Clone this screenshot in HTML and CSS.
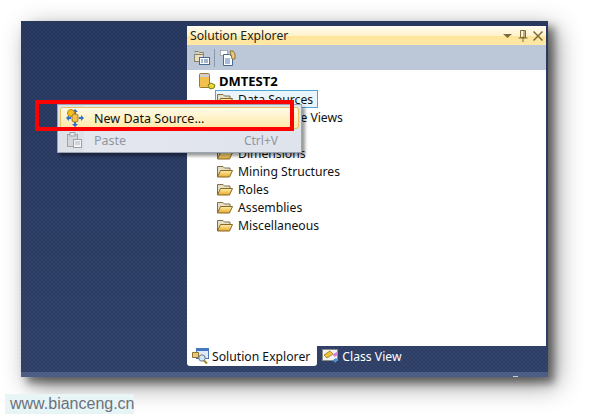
FILE: index.html
```html
<!DOCTYPE html>
<html lang="en">
<head>
<meta charset="utf-8">
<title>Solution Explorer</title>
<link rel="stylesheet" href="styles.css">
</head>
<body>
<svg class="defs" width="0" height="0" aria-hidden="true">
  <defs>
    <linearGradient id="fold" x1="0" y1="0" x2="0" y2="1"><stop offset="0" stop-color="#fff0a8"/><stop offset="1" stop-color="#e8a92c"/></linearGradient>
    <symbol id="folder" viewBox="0 0 16 14">
      <path d="M0.500 13V2.500h5.500l1.500 1.500h5.500v2.500" fill="#e6dfc4" stroke="#7f7048"/>
      <path d="M0.500 13L3.500 6.500h12L12.500 13z" fill="url(#fold)" stroke="#86692a"/>
    </symbol>
  </defs>
</svg>
<main class="window">
  <section class="panel">
    <header class="titlebar">
      <span class="title">Solution Explorer</span>
      <span class="controls">
        <svg class="ctl" width="12" height="12" viewBox="0 0 12 12"><path d="M1 4h9L5.500 8z" fill="#7a6a3c"/></svg>
        <svg class="ctl" width="12" height="14" viewBox="0 0 12 14"><path d="M3.500 1.500h5v7h-5zM7 2v6M1.500 9h9M6 9v4" fill="none" stroke="#7a6a3c"/></svg>
        <svg class="ctl" width="12" height="12" viewBox="0 0 12 12"><path d="M1.500 1.500l9 9M10.500 1.500l-9 9" fill="none" stroke="#7a6a3c" stroke-width="1.500"/></svg>
      </span>
    </header>
    <div class="toolbar">
      <svg width="18" height="18" viewBox="0 0 18 18"><path d="M1.500 2.500h4l1 1h4v3" fill="#e8dcae" stroke="#8c8468"/><rect x="1.500" y="5.500" width="9" height="7" fill="#e8e0c4" stroke="#8c8468"/><rect x="6.500" y="8.500" width="10" height="7" fill="#fff" stroke="#4a6a9a"/><path d="M8 11h2M8 13h2M11 11h4M11 13h4" stroke="#4a6a9a"/></svg>
      <span class="sep"></span>
      <svg width="18" height="18" viewBox="0 0 18 18"><path d="M2.500 1.500h7v5h-7z" fill="#fff" stroke="#777" stroke-dasharray="1 1"/><path d="M5.500 5.500h6l3 3v8h-9z" fill="#fff" stroke="#4a6a9a"/><path d="M7 10h5M7 12h5M7 14h5" stroke="#4a7ac0"/><path d="M12 2h3l2 3v5h-3z" fill="#e9c877" stroke="#8f7433"/></svg>
    </div>
    <div class="tree">
      <div class="root">
        <svg width="18" height="18" viewBox="0 0 18 18"><rect x="1.500" y="1.500" width="10" height="14" rx="1" fill="#f2c04c" stroke="#9a7a2c"/><rect x="2" y="2" width="9" height="3" fill="#cfcfcf"/><path d="M10 13l3-2 4 2-1 3-4 1z" fill="#e8dc30" stroke="#7a7a20"/></svg>
        <b>DMTEST2</b>
      </div>
      <ul class="items">
        <li class="row sel"><svg class="fold" width="16" height="14"><use href="#folder"/></svg><span class="lbl">Data Sources</span></li>
        <li class="row"><svg class="fold" width="16" height="14"><use href="#folder"/></svg><span class="lbl">Data Source Views</span></li>
        <li class="row"><svg class="fold" width="16" height="14"><use href="#folder"/></svg><span class="lbl">Cubes</span></li>
        <li class="row"><svg class="fold" width="16" height="14"><use href="#folder"/></svg><span class="lbl">Dimensions</span></li>
        <li class="row"><svg class="fold" width="16" height="14"><use href="#folder"/></svg><span class="lbl">Mining Structures</span></li>
        <li class="row"><svg class="fold" width="16" height="14"><use href="#folder"/></svg><span class="lbl">Roles</span></li>
        <li class="row"><svg class="fold" width="16" height="14"><use href="#folder"/></svg><span class="lbl">Assemblies</span></li>
        <li class="row"><svg class="fold" width="16" height="14"><use href="#folder"/></svg><span class="lbl">Miscellaneous</span></li>
      </ul>
    </div>
  </section>
  <nav class="tabs">
    <span class="tab active">
      <svg width="18" height="16" viewBox="0 0 18 16"><rect x="4.500" y="0.500" width="12" height="10" fill="#dfe8f4" stroke="#4a78b8"/><rect x="5" y="1" width="11" height="2" fill="#3f78c8"/><path d="M0.500 4.500h6v5h-6z" fill="#e9c877" stroke="#8f7433"/><circle cx="10" cy="10" r="3.200" fill="#cfe6f4" stroke="#6a7a8a"/><path d="M12 12.500l3 3" stroke="#a8842c" stroke-width="2"/></svg>
      Solution Explorer
    </span>
    <span class="tab">
      <svg width="18" height="16" viewBox="0 0 18 16"><rect x="0.500" y="1.500" width="15" height="11" fill="#f2f2f2" stroke="#8a8a8a"/><path d="M2 7l6-4 3 3-6 4z" fill="#eec23c" stroke="#a88a2c"/><path d="M11 6l4-2 1 3-4 2z" fill="#d878d8"/><path d="M11 12l3-2 2 2-3 3z" fill="#4a90d8"/></svg>
      Class View
    </span>
  </nav>
  <div class="statusband"><span class="notch"></span></div>

  <div class="menu">
    <div class="mi hot">
      <svg class="mico" width="18" height="18" viewBox="0 0 18 18"><path d="M9 0l3 3h-2v2H8V3H6zM9 18l3-3h-2v-2H8v2H6zM0 9l3-3v2h2v2H3v2zM18 9l-3-3v2h-2v2h2v2z" fill="#2f6fd0"/><circle cx="5" cy="4" r="3.500" fill="#f5c21e" stroke="#b8860b"/><rect x="6" y="5" width="6" height="8" rx="2" fill="#f2c04c" stroke="#9a7a2c"/></svg>
      <span class="mtext">New Data Source...</span>
    </div>
    <div class="mi off">
      <svg class="mico" width="18" height="18" viewBox="0 0 18 18"><rect x="1.500" y="3.500" width="10" height="12" fill="#d4d6da" stroke="#a0a4aa"/><rect x="4" y="1.500" width="5" height="3.500" fill="#e4e6ea" stroke="#a0a4aa"/><rect x="7.500" y="8.500" width="8" height="8" fill="#f2f3f5" stroke="#a0a4aa"/><path d="M9 11h5M9 13h5" stroke="#b0b4ba"/></svg>
      <span class="mtext">Paste</span>
      <span class="key">Ctrl+V</span>
    </div>
  </div>
  <div class="redbox"></div>
</main>
<p class="mark">www.bianceng.cn</p>
</body>
</html>
```
FILE: styles.css
```css
* { box-sizing: border-box; }
html, body { margin: 0; height: 100%; }
body {
  width: 590px;
  height: 419px;
  overflow: hidden;
  background: #fff;
  font-family: "Noto Sans", "Open Sans", sans-serif;
  font-size: 12px;
  color: #111;
  padding: 21px 0 0 21px;
}
.defs { position: absolute; }
.window {
  position: relative;
  width: 527px;
  height: 356px;
  padding: 5px 2px 0 166px;
  background-color: #2f4169;
  background-image:
    radial-gradient(circle at 1px 1px, rgba(24, 36, 70, .28) 1px, transparent 1.200px),
    radial-gradient(circle at 3px 3px, rgba(24, 36, 70, .28) 1px, transparent 1.200px),
    linear-gradient(#2a3c64, #34466e);
  background-size: 4px 4px, 4px 4px, 100% 100%;
  box-shadow: 6px 6px 8px rgba(0, 0, 0, .45), 8px 8px 24px rgba(0, 0, 0, .45);
}
.panel {
  width: 359px;
  height: 320px;
  background: #fff;
  display: flex;
  flex-direction: column;
}
.titlebar {
  height: 19px;
  flex: none;
  display: flex;
  align-items: center;
  justify-content: space-between;
  padding: 0 2px 0 3px;
  background: linear-gradient(#fffdf0 0, #fff2cc 50%, #ffe59a 55%, #ffe8a6 100%);
}
.title { font-size: 12.200px; color: #222; }
.controls { display: flex; align-items: center; gap: 3px; }
.ctl { display: block; }
.toolbar {
  height: 25px;
  flex: none;
  display: flex;
  align-items: center;
  gap: 3px;
  padding: 0 0 0 6px;
  background: #bcc7d8;
}
.sep { width: 1px; height: 18px; background: #8a97ac; }
.tree { padding: 2px 0 0 11px; }
.root { display: flex; align-items: center; gap: 3px; height: 18px; font-size: 13px; }
.root b { color: #000; }
.items { list-style: none; margin: 0; padding: 0 0 0 19px; }
.row { display: flex; align-items: center; height: 18px; font-size: 12.200px; }
.fold { flex: none; margin-right: 5px; }
.sel {
  width: 103px;
  margin-left: -2px;
  padding-left: 1px;
  border: 1px solid #4ea6d6;
  background: #eaf5fb;
}
.tabs {
  height: 20px;
  display: flex;
  color: #fff;
  font-size: 12.200px;
}
.tab {
  display: flex;
  align-items: center;
  gap: 2px;
  height: 20px;
  padding: 0 4px 0 5px;
}
.tab.active {
  background: #fff;
  color: #111;
  border-radius: 0 0 3px 3px;
  padding: 0 7px 0 5px;
}
.statusband {
  position: absolute;
  left: 0;
  right: 0;
  bottom: 0;
  height: 5px;
  background: #4c5e86;
}
.notch {
  position: absolute;
  right: 30px;
  bottom: 0;
  width: 5px;
  height: 1px;
  background: #c6d0dc;
}
.menu {
  position: absolute;
  left: 36px;
  top: 83px;
  width: 245px;
  height: 49px;
  padding: 2px;
  border: 1px solid #9aa3b2;
  background: linear-gradient(90deg, #dde1e8 0 26px, #e4e7ee 26px, #dfe3ec 100%);
  box-shadow: 3px 3px 3px rgba(0, 0, 0, .4);
}
.mi {
  height: 22px;
  display: flex;
  align-items: center;
  padding: 0 6px 0 5px;
}
.mico { flex: none; margin-right: 10px; }
.mtext { font-size: 12.500px; }
.hot {
  border: 1px solid #e5c365;
  border-radius: 3px;
  background: linear-gradient(#fffbe8, #ffe9a8);
  color: #111;
}
.off { color: #8f96a3; }
.off .mico { margin-left: 1px; }
.key { margin-left: auto; padding-right: 15px; }
.redbox {
  position: absolute;
  left: 14px;
  top: 79px;
  width: 259px;
  height: 31px;
  border: 4px solid #f00;
}
.mark {
  position: absolute;
  left: 5px;
  top: 394px;
  margin: 0;
  width: 129px;
  height: 20px;
  line-height: 20px;
  padding-left: 5px;
  background: #e8f5f6;
  color: #6a727c;
  font-family: "Liberation Sans", sans-serif;
  font-size: 16px;
  white-space: nowrap;
}
```
